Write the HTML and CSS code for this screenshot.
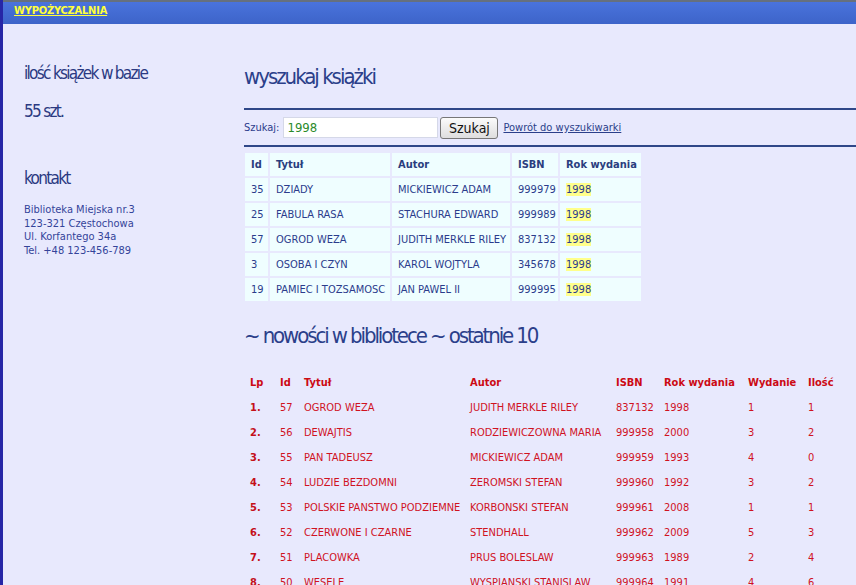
FILE: index.html
```html
<!DOCTYPE html>
<html lang="pl">
<head>
<meta charset="utf-8">
<title>Wypożyczalnia</title>
<link rel="stylesheet" href="styles.css">
</head>
<body>
<div class="frame">
  <div class="topbar"><a href="#" class="brand">WYPOŻYCZALNIA</a></div>
  <div class="page">
    <aside class="sidebar">
      <h2 class="side-title first">ilość książek w bazie</h2>
      <h2 class="side-title count">55 szt.</h2>
      <h2 class="side-title contact">kontakt</h2>
      <p class="address">Biblioteka Miejska nr.3<br>123-321 Częstochowa<br>Ul. Korfantego 34a<br>Tel. +48 123-456-789</p>
    </aside>
    <main class="main">
      <h1 class="title">wyszukaj książki</h1>
      <div class="search-bar">
        <label class="search-label">Szukaj:</label>
        <input class="search-input" type="text" value="1998">
        <button class="search-btn">Szukaj</button>
        <a href="#" class="back-link">Powrót do wyszukiwarki</a>
      </div>
      <table class="results">
        <colgroup><col class="c-id"><col class="c-title"><col class="c-author"><col class="c-isbn"><col class="c-year"></colgroup>
        <thead><tr><th>Id</th><th>Tytuł</th><th>Autor</th><th>ISBN</th><th>Rok wydania</th></tr></thead>
        <tbody>
          <tr><td>35</td><td>DZIADY</td><td>MICKIEWICZ ADAM</td><td>999979</td><td><span class="hl">1998</span></td></tr>
          <tr><td>25</td><td>FABULA RASA</td><td>STACHURA EDWARD</td><td>999989</td><td><span class="hl">1998</span></td></tr>
          <tr><td>57</td><td>OGROD WEZA</td><td>JUDITH MERKLE RILEY</td><td>837132</td><td><span class="hl">1998</span></td></tr>
          <tr><td>3</td><td>OSOBA I CZYN</td><td>KAROL WOJTYLA</td><td>345678</td><td><span class="hl">1998</span></td></tr>
          <tr><td>19</td><td>PAMIEC I TOZSAMOSC</td><td>JAN PAWEL II</td><td>999995</td><td><span class="hl">1998</span></td></tr>
        </tbody>
      </table>
      <h1 class="title news-title">~ nowości w bibliotece ~ ostatnie 10</h1>
      <table class="news">
        <colgroup><col class="n-lp"><col class="n-id"><col class="n-title"><col class="n-author"><col class="n-isbn"><col class="n-year"><col class="n-ed"><col class="n-qty"></colgroup>
        <thead><tr><th>Lp</th><th>Id</th><th>Tytuł</th><th>Autor</th><th>ISBN</th><th>Rok wydania</th><th>Wydanie</th><th>Ilość</th></tr></thead>
        <tbody>
          <tr><td class="lp">1.</td><td>57</td><td>OGROD WEZA</td><td>JUDITH MERKLE RILEY</td><td>837132</td><td>1998</td><td>1</td><td>1</td></tr>
          <tr><td class="lp">2.</td><td>56</td><td>DEWAJTIS</td><td>RODZIEWICZOWNA MARIA</td><td>999958</td><td>2000</td><td>3</td><td>2</td></tr>
          <tr><td class="lp">3.</td><td>55</td><td>PAN TADEUSZ</td><td>MICKIEWICZ ADAM</td><td>999959</td><td>1993</td><td>4</td><td>0</td></tr>
          <tr><td class="lp">4.</td><td>54</td><td>LUDZIE BEZDOMNI</td><td>ZEROMSKI STEFAN</td><td>999960</td><td>1992</td><td>3</td><td>2</td></tr>
          <tr><td class="lp">5.</td><td>53</td><td>POLSKIE PANSTWO PODZIEMNE</td><td>KORBONSKI STEFAN</td><td>999961</td><td>2008</td><td>1</td><td>1</td></tr>
          <tr><td class="lp">6.</td><td>52</td><td>CZERWONE I CZARNE</td><td>STENDHALL</td><td>999962</td><td>2009</td><td>5</td><td>3</td></tr>
          <tr><td class="lp">7.</td><td>51</td><td>PLACOWKA</td><td>PRUS BOLESLAW</td><td>999963</td><td>1989</td><td>2</td><td>4</td></tr>
          <tr><td class="lp">8.</td><td>50</td><td>WESELE</td><td>WYSPIANSKI STANISLAW</td><td>999964</td><td>1991</td><td>4</td><td>6</td></tr>
        </tbody>
      </table>
    </main>
  </div>
</div>
</body>
</html>
```
FILE: styles.css
```css
* { box-sizing: border-box; }
html, body { margin: 0; padding: 0; }
body {
  background: #e8e9fd;
  font-family: "DejaVu Sans Condensed", "DejaVu Sans", sans-serif;
  font-size: 11px;
  color: #2b3c8c;
  overflow: hidden;
}
.frame {
  border-left: 3px solid #2626a6;
  min-height: 100vh;
}
.topbar {
  height: 24px;
  border-top: 2px solid #66707e;
  background: linear-gradient(#4a73dc, #3d64c9);
  padding: 2px 0 0 11px;
}
.brand {
  color: #ffff3a;
  font-weight: bold;
  font-size: 11px;
  letter-spacing: -0.2px;
  text-decoration: underline;
}
.page { display: flex; }
.sidebar { flex: none; width: 241px; padding-left: 21px; }
.side-title {
  margin: 0;
  font-weight: normal;
  font-size: 17px;
  letter-spacing: -1.7px;
  color: #2b3a82;
}
.side-title.first { margin-top: 39px; }
.side-title.count { margin-top: 18px; }
.side-title.contact { margin-top: 47px; }
.address {
  margin: 15px 0 0;
  font-size: 11px;
  line-height: 13.5px;
  color: #34449a;
}
.main { flex: 1; min-width: 0; }
.title {
  margin: 40px 0 0;
  font-weight: normal;
  font-size: 22px;
  letter-spacing: -2px;
  color: #2b3f8a;
  line-height: 26px;
}
.search-bar {
  margin-top: 18px;
  border-top: 2px solid #2f4788;
  border-bottom: 2px solid #2f4788;
  display: flex;
  align-items: center;
  height: 39px;
}
.search-label { font-size: 11px; margin-right: 4px; }
.search-input {
  width: 155px;
  height: 21px;
  border: 1px solid #d5d8e8;
  background: #fff;
  color: #2a8a2a;
  font-family: inherit;
  font-size: 13px;
  padding: 0 3px;
}
.search-btn {
  margin-left: 2px;
  width: 58px;
  height: 22px;
  font-family: inherit;
  font-size: 14px;
  color: #111;
  background: linear-gradient(#fbfbfb, #dedede);
  border: 1px solid #777;
  border-radius: 3px;
  padding: 0;
}
.back-link { margin-left: 5px; color: #2b3f8a; font-size: 11px; }
.results {
  margin: 4px 0 0 -1px;
  border-spacing: 2px;
  table-layout: fixed;
  width: 400px;
}
.c-id { width: 23px; }
.c-title { width: 120px; }
.c-author { width: 118px; }
.c-isbn { width: 46px; }
.c-year { width: 81px; }
.results th, .results td {
  background: #effeff;
  height: 23px;
  padding: 0 0 0 6px;
  text-align: left;
  white-space: nowrap;
  overflow: hidden;
}
.results th { font-weight: bold; color: #2a3d7e; }
.hl { background: #ffff8a; }
.news-title { margin-top: 20px; letter-spacing: -2.1px; }
.news {
  margin: 20px 0 0 -1px;
  border-spacing: 2px;
  table-layout: fixed;
  width: 607px;
  color: #d0121f;
}
.n-lp { width: 28px; }
.n-id { width: 22px; }
.n-title { width: 164px; }
.n-author { width: 144px; }
.n-isbn { width: 46px; }
.n-year { width: 82px; }
.n-ed { width: 58px; }
.n-qty { width: 45px; }
.news th, .news td {
  height: 23px;
  padding: 0 0 0 5px;
  text-align: left;
  white-space: nowrap;
}
.news th { font-weight: bold; color: #cc0a14; }
.news .lp { font-weight: bold; color: #c4101a; }
```
